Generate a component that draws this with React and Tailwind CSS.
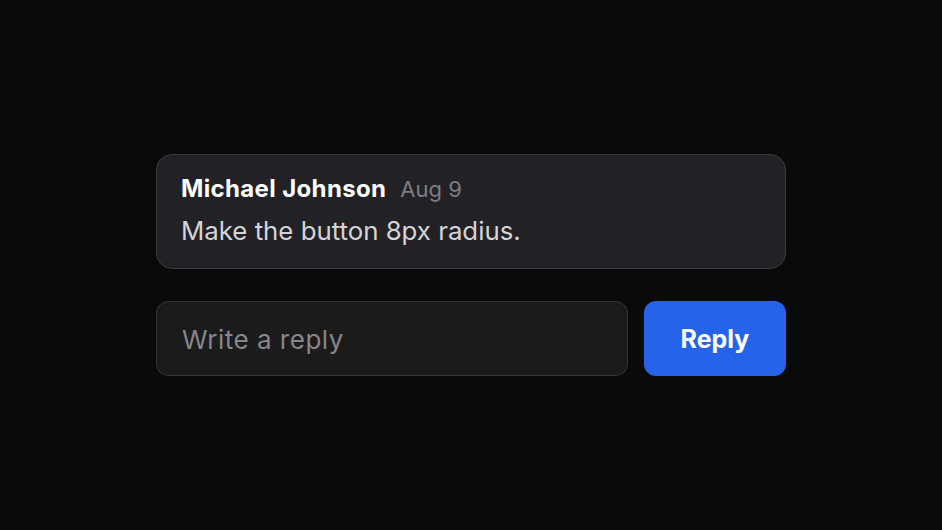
import React from 'react';

const App = () => {
  return (
    <div className="min-h-screen w-full bg-[#0a0a0a] flex items-center justify-center font-['Inter',sans-serif]">
      <div className="w-[630px] flex flex-col gap-8">
        {/* Comment card */}
        <div className="rounded-[16px] border border-[#3a3a3e] bg-[#222226] px-6 pt-5 pb-[19px]">
          <div className="flex items-baseline gap-[14px] h-[28px] leading-[28px]">
            <span className="text-[24px] font-bold text-white tracking-[0.35px]">Michael Johnson</span>
            <span className="text-[22px] text-[#7c7c82]">Aug 9</span>
          </div>
          <p className="mt-[10px] text-[25.8px] leading-[36px] text-[#d4d4d8]">Make the button 8px radius.</p>
        </div>

        {/* Reply row */}
        <div className="flex gap-4">
          <input
            type="text"
            placeholder="Write a reply"
            className="flex-1 h-[75px] rounded-[12px] border border-[#343436] bg-[#1b1b1b] px-[25px] pt-[2px] text-[26px] tracking-[0.5px] text-white placeholder:text-[#86868a] outline-none"
          />
          <button className="w-[142px] h-[75px] rounded-[12px] bg-[#2563eb] pt-[3px] text-[25px] font-bold text-white">
            Reply
          </button>
        </div>
      </div>
    </div>
  );
};

export default App;
